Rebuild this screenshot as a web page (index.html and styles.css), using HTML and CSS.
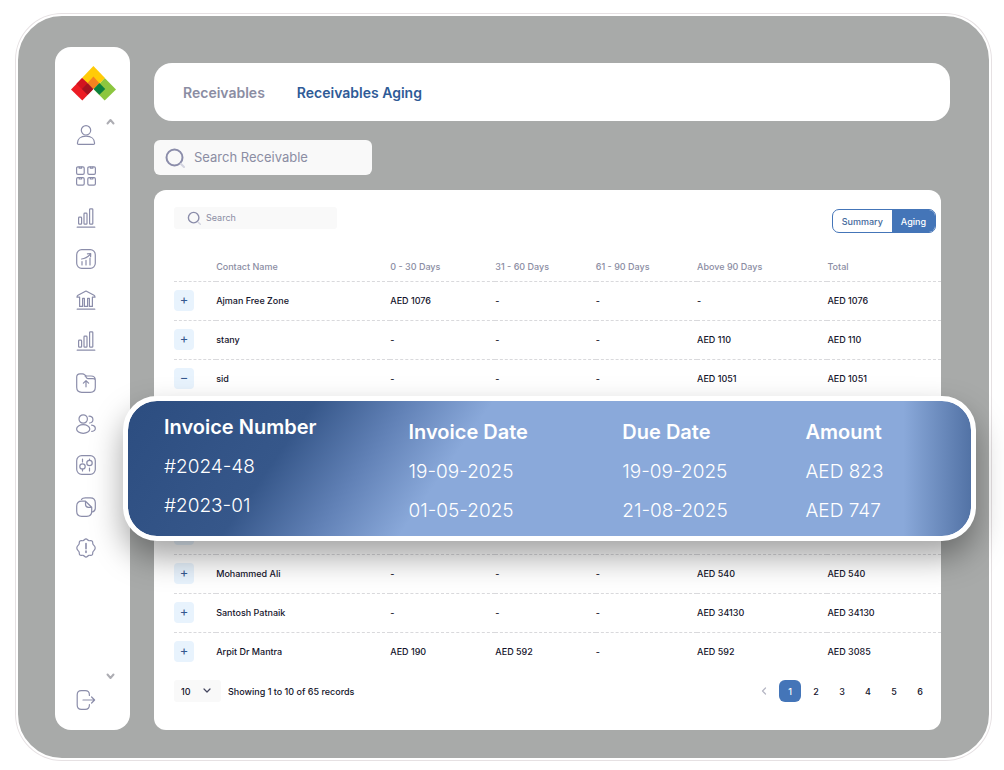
FILE: index.html
```html
<!DOCTYPE html>
<html lang="en">
  <head>
    <meta charset="UTF-8" />
    <meta name="viewport" content="width=device-width, initial-scale=1.0" />
    <title>Receivables Aging</title>
    <link rel="stylesheet" href="styles.css">
  </head>
  <body>
    <div class="frame">
      <aside class="sidebar">
        <a class="logo" href="#" aria-label="Home">
          <svg width="45" height="35" viewBox="0 0 45 35">
            <path fill="#ec1c24" d="M11.3 12 22 23.4 11.3 34.5 0 23.4z" />
            <path fill="#8cc63f" d="M33.7 12 45 23.4 33.7 34.5 22.8 23.4z" />
            <path fill="#ffcb08" d="M22.4 0 34 12 28 18 22.4 23 11 12z" />
            <path fill="#f58220" d="M22.4 10.5 28.2 17 22.4 23 16.6 17z" />
            <path fill="#d2141f" d="M11 12 16.600 17 10.800 23 5.500 17.800z" />
            <path fill="#a5121f" d="M16.6 17 22.4 23 16.6 28.8 10.8 23z" />
            <path fill="#0b7f3f" d="M28.4 17 34.2 23 28.4 28.8 22.6 23z" />
          </svg>
        </a>
        <div class="menu">
          <nav class="nav">
            <a href="#" aria-label="Contacts">
              <svg viewBox="0 0 20 20"><circle cx="10" cy="5.3" r="4.7" /><path d="M1.4 18.2c0-4 3.2-7 8.6-7s8.6 3 8.6 7c0 .8-.5 1.1-1.2 1.1H2.6c-.7 0-1.2-.3-1.2-1.1z" /></svg>
            </a>
            <a href="#" aria-label="Dashboard">
              <svg viewBox="0 0 20 20"><rect x=".6" y=".9" width="7.6" height="7.4" rx="1.3" /><rect x="11.8" y=".9" width="7.6" height="7.4" rx="1.3" /><rect x=".6" y="11.7" width="7.6" height="7.4" rx="1.3" /><rect x="11.8" y="11.7" width="7.6" height="7.4" rx="1.3" /><path d="M3.2 1v1.2h2.4V1M14.4 1v1.2h2.4V1M3.2 11.8V13h2.4v-1.2M14.4 11.8V13h2.4v-1.2" /></svg>
            </a>
            <a href="#" aria-label="Sales">
              <svg viewBox="0 0 20 20"><rect x="2.6" y="9.2" width="3" height="7" rx=".8" /><rect x="8" y="5.2" width="3" height="11" rx=".8" /><rect x="13.6" y=".8" width="3.2" height="15.4" rx=".8" /><path d="M1.2 19.2h17.6" /></svg>
            </a>
            <a href="#" aria-label="Analytics">
              <svg viewBox="0 0 20 20"><rect x=".7" y=".7" width="18.6" height="18.6" rx="5" /><path d="M6 16v-3.4M10 16v-4.6M14 16V9M5.6 10c3.6-.3 6-1.8 8.6-4.6M11.4 4.8l3.3-.3-.1 3.2" /></svg>
            </a>
            <a href="#" aria-label="Banking">
              <svg viewBox="0 0 20 20"><path d="M1 7.2c0-1 .3-1.6 1-2L10 1l8 4.2c.7.4 1 1 1 2h-2.600v9.200h-3V8.400h-1.800v8h-3.200v-8H6.600v8h-3V7.200zM1.200 19.200h17.600" /></svg>
            </a>
            <a href="#" aria-label="Purchases">
              <svg viewBox="0 0 20 20"><rect x="2.6" y="9.2" width="3" height="7" rx=".8" /><rect x="8" y="5.2" width="3" height="11" rx=".8" /><rect x="13.6" y=".8" width="3.2" height="15.4" rx=".8" /><path d="M1.2 19.2h17.6" /></svg>
            </a>
            <a href="#" aria-label="Files">
              <svg viewBox="0 0 20 20"><path d="M.7 5V4C.7 1.800 2 .8 4 .8h2.500c2.300 0 2.300 2.200 4.500 2.200h4c2.600 0 4.300 1.500 4.300 4v7.300c0 3.300-1.700 5-5 5H5.700c-3.300 0-5-1.700-5-5zM9 3c1.200 0 .8 2.600 3 2.600h5c1.300 0 2.100.5 2.300 1.400M10 13.800V8M7.400 10.200 10 7.600l2.600 2.600" /></svg>
            </a>
            <a href="#" aria-label="Employees">
              <svg viewBox="0 0 20 20"><circle cx="7.200" cy="5" r="4.200" /><ellipse cx="7.200" cy="15" rx="6.600" ry="4.300" /><path d="M13 2.200c5 0 5.200 6.200.6 6.800M15.600 11.200c4.900.8 4.900 5.600.2 6.200" /></svg>
            </a>
            <a href="#" aria-label="Adjustments">
              <svg viewBox="0 0 20 20"><rect x=".7" y=".7" width="18.6" height="18.6" rx="5" /><circle cx="6.500" cy="11.500" r="2.700" /><circle cx="13.500" cy="8" r="2.700" /><path d="M6.500 4v3M6.500 14.200V16M13.500 4v1.300M13.500 13v3" /></svg>
            </a>
            <a href="#" aria-label="Documents">
              <svg viewBox="0 0 20 20"><path d="M9.500 4.200H5.700c-3.300 0-5 1.700-5 5v5.100c0 3.300 1.700 5 5 5h5c3.300 0 5-1.700 5-5v-4zM9.500 4.200v3.100c0 2 1 3 3 3h3.200M5.500 2.400C6.300 1.300 7.600.8 9.300.8h5c3.300 0 5 1.700 5 5v5c0 2.200-1 3.700-2.800 4.200" /></svg>
            </a>
            <a href="#" aria-label="Alerts">
              <svg viewBox="0 0 20 20"><path d="M10 .8c1.300 0 1.700 1.700 3 1.900s2.300-.5 3.200.4.200 2 .8 3.200 2.200 1.800 2.200 3.700-1.600 2.500-2.200 3.700.1 2.300-.8 3.200-2 .2-3.200.4-1.700 1.900-3 1.900-1.700-1.700-3-1.900-2.300.5-3.200-.4-.2-2-.8-3.200S.8 11.900.8 10 2.400 7.500 3 6.300 2.900 4 3.800 3.100s2-.2 3.200-.4S8.700.8 10 .8z" /><path stroke-width="1.600" d="M10 5.600v5.200M10 13v1.500" /></svg>
            </a>
          </nav>
          <div class="scroll-arrows">
            <button aria-label="Scroll up"><svg width="9" height="7" viewBox="0 0 9 7"><path d="M1.500 5.500 4.500 2l3 3.500" /></svg></button>
            <button aria-label="Scroll down"><svg width="9" height="7" viewBox="0 0 9 7"><path d="M1.500 1.500 4.500 5l3-3.500" /></svg></button>
          </div>
        </div>
        <a class="logout" href="#" aria-label="Log out">
          <svg viewBox="0 0 20 20"><path d="M13.400 5.400V5c0-3-1.300-4.400-4.200-4.400H5.400C2.500.6 1.200 2 1.200 5v10c0 3 1.300 4.400 4.200 4.400h3.800c2.900 0 4.200-1.400 4.200-4.400v-.4M7 10h11.400M15.600 7l3 3-3 3" /></svg>
        </a>
      </aside>

      <main class="main">
        <nav class="tabs">
          <a href="#">Receivables</a>
          <a href="#" class="active">Receivables Aging</a>
        </nav>

        <label class="search search-main">
          <svg width="20" height="20" viewBox="0 0 20 20"><circle cx="9.500" cy="9.500" r="8" /><path d="m16 16 3 3" /></svg>
          <input type="search" placeholder="Search Receivable" aria-label="Search Receivable" />
        </label>

        <section class="card">
          <div class="toolbar">
            <label class="search search-table">
              <svg width="14" height="14" viewBox="0 0 20 20"><circle cx="9.500" cy="9.500" r="7.500" /><path d="m16 16 3 3" /></svg>
              <input type="search" placeholder="Search" aria-label="Search" />
            </label>
            <div class="toggle">
              <button>Summary</button>
              <button class="active">Aging</button>
            </div>
          </div>

          <table class="aging">
            <thead>
              <tr>
                <th class="col-expand"></th>
                <th class="col-name">Contact Name</th>
                <th class="col-30">0 - 30 Days</th>
                <th class="col-60">31 - 60 Days</th>
                <th class="col-90">61 - 90 Days</th>
                <th class="col-above">Above 90 Days</th>
                <th>Total</th>
              </tr>
            </thead>
            <tbody>
              <tr>
                <td><button class="expand">+</button></td>
                <td>Ajman Free Zone</td>
                <td>AED 1076</td>
                <td>-</td>
                <td>-</td>
                <td>-</td>
                <td>AED 1076</td>
              </tr>
              <tr>
                <td><button class="expand">+</button></td>
                <td>stany</td>
                <td>-</td>
                <td>-</td>
                <td>-</td>
                <td>AED 110</td>
                <td>AED 110</td>
              </tr>
              <tr>
                <td><button class="expand">−</button></td>
                <td>sid</td>
                <td>-</td>
                <td>-</td>
                <td>-</td>
                <td>AED 1051</td>
                <td>AED 1051</td>
              </tr>
              <tr class="detail-row">
                <td colspan="7">
                  <div class="invoices">
                    <table>
                      <thead>
                        <tr>
                          <th class="inv-number">Invoice Number</th>
                          <th class="inv-date">Invoice Date</th>
                          <th class="inv-due">Due Date</th>
                          <th>Amount</th>
                        </tr>
                      </thead>
                      <tbody>
                        <tr>
                          <td>#2024-48</td>
                          <td>19-09-2025</td>
                          <td>19-09-2025</td>
                          <td>AED 823</td>
                        </tr>
                        <tr>
                          <td>#2023-01</td>
                          <td>01-05-2025</td>
                          <td>21-08-2025</td>
                          <td>AED 747</td>
                        </tr>
                      </tbody>
                    </table>
                  </div>
                </td>
              </tr>
              <tr>
                <td><button class="expand" aria-label="Expand"></button></td>
                <td colspan="6"></td>
              </tr>
              <tr>
                <td><button class="expand">+</button></td>
                <td>Mohammed Ali</td>
                <td>-</td>
                <td>-</td>
                <td>-</td>
                <td>AED 540</td>
                <td>AED 540</td>
              </tr>
              <tr>
                <td><button class="expand">+</button></td>
                <td>Santosh Patnaik</td>
                <td>-</td>
                <td>-</td>
                <td>-</td>
                <td>AED 34130</td>
                <td>AED 34130</td>
              </tr>
              <tr>
                <td><button class="expand">+</button></td>
                <td>Arpit Dr Mantra</td>
                <td>AED 190</td>
                <td>AED 592</td>
                <td>-</td>
                <td>AED 592</td>
                <td>AED 3085</td>
              </tr>
            </tbody>
          </table>

          <div class="footer">
            <div class="page-size">
              <select aria-label="Records per page">
                <option>10</option>
              </select>
              <svg width="8" height="6" viewBox="0 0 8 6"><path d="m1 1 3 3 3-3" /></svg>
            </div>
            <span>Showing 1 to 10 of 65 records</span>
            <nav class="pages">
              <button class="prev" aria-label="Previous page"><svg width="6" height="8" viewBox="0 0 6 8"><path d="M4.500 1 1.500 4l3 3" /></svg></button>
              <button class="active">1</button>
              <button>2</button>
              <button>3</button>
              <button>4</button>
              <button>5</button>
              <button>6</button>
            </nav>
          </div>
        </section>
      </main>
    </div>
  </body>
</html>
```

FILE: styles.css
```css
* {
  box-sizing: border-box;
}

body {
  font-family: Inter, "Liberation Sans", sans-serif;
  background-color: #fff;
  color: #14142b;
  margin: 0;
  padding: 14px 13px 10px 16px;
}

button {
  font-family: inherit;
  border: none;
  background: none;
  padding: 0;
  cursor: pointer;
}

a {
  text-decoration: none;
}

svg {
  display: block;
  fill: none;
  stroke: #8b8daa;
  stroke-width: 1.2;
  stroke-linecap: round;
  stroke-linejoin: round;
}

.frame {
  display: flex;
  gap: 24px;
  padding: 31px 39px 28px 37px;
  background-color: #a8aaa9;
  border: 2px solid #fff;
  border-radius: 46px;
  box-shadow: 0 0 0 1px #e6e1e3;
}

/* Sidebar */
.sidebar {
  width: 75px;
  flex-shrink: 0;
  display: flex;
  flex-direction: column;
  padding: 19px 0 20px;
  background-color: #fff;
  border-radius: 16px;
}

.logo {
  padding-left: 16px;
}

.logo svg {
  stroke: none;
}

.menu {
  flex: 1;
  display: flex;
  gap: 10px;
  padding: 17px 0 10px 21px;
}

.nav {
  display: flex;
  flex-direction: column;
  justify-content: space-between;
  padding: 7px 0 122px;
}

.nav svg,
.logout svg {
  width: 20px;
  height: 20px;
}

.scroll-arrows {
  display: flex;
  flex-direction: column;
  justify-content: space-between;
}

.scroll-arrows svg {
  stroke: #adadb3;
  stroke-width: 2;
}

.logout {
  padding-left: 21px;
}

/* Main area */
.main {
  flex: 1;
  min-width: 0;
  padding-top: 16px;
}

.tabs {
  display: flex;
  align-items: center;
  gap: 32px;
  height: 58px;
  padding: 0 29px;
  background-color: #fff;
  border-radius: 18px;
}

.tabs a {
  font-size: 14px;
  font-weight: 600;
  color: #8b8da3;
}

.tabs .active {
  color: #2f5b97;
}

.search {
  display: flex;
  align-items: center;
  background-color: #f9f9f9;
}

.search input {
  flex: 1;
  min-width: 0;
  padding: 0 0 2px;
  border: none;
  outline: none;
  background: none;
  font-family: inherit;
  font-size: inherit;
  color: #14142b;
}

.search input::placeholder {
  color: #8b8da3;
  opacity: 1;
}

.search path {
  stroke: #d3d4e0;
}

.search-main {
  width: 218px;
  height: 35px;
  margin: 19px 0 15px;
  padding: 0 11px;
  gap: 9px;
  border-radius: 6px;
  font-size: 13px;
}

.search-main svg {
  stroke-width: 2;
}

.card {
  margin-right: 9px;
  padding: 17px 0 28px 20px;
  background-color: #fff;
  border-radius: 12px;
}

.toolbar {
  display: flex;
  align-items: flex-start;
  justify-content: space-between;
  padding-right: 5px;
}

.search-table {
  width: 163px;
  height: 22px;
  padding: 0 13px;
  gap: 5px;
  border-radius: 3px;
  font-size: 9px;
}

.search-table svg {
  stroke-width: 2;
}

.toggle {
  display: flex;
  height: 24px;
  margin-top: 2px;
  border: 1px solid #4475b8;
  border-radius: 7px;
  overflow: hidden;
}

.toggle button {
  padding: 0 9px;
  font-size: 9px;
  font-weight: 500;
  color: #44699c;
}

.toggle .active {
  background-color: #4475b8;
  color: #fff;
}

/* Aging table */
.aging {
  width: 100%;
  margin-top: 20px;
  table-layout: fixed;
  border-collapse: collapse;
  font-size: 9px;
}

.aging th,
.aging td {
  padding: 0;
  text-align: left;
}

.aging > thead th {
  height: 28px;
  color: #8b8da3;
  font-weight: 500;
}

.aging > tbody > tr > td {
  height: 39px;
  border-top: 1px dashed #d9d9dc;
  font-weight: 500;
}

.col-expand {
  width: 5.5%;
}

.col-name {
  width: 22.7%;
}

.col-30 {
  width: 13.7%;
}

.col-60 {
  width: 13.1%;
}

.col-90 {
  width: 13.2%;
}

.col-above {
  width: 17%;
}

.expand {
  display: block;
  width: 20px;
  height: 21px;
  padding-bottom: 3px;
  background-color: #e8f3fd;
  border-radius: 4px;
  color: #34598f;
  font-size: 13px;
  line-height: 18px;
}

.aging > tbody > .detail-row > td {
  position: relative;
  height: 117px;
}

/* Expanded invoices, floats over the rows */
.invoices {
  position: absolute;
  top: -3px;
  left: -51px;
  right: -35px;
  padding: 12px 0 6px 36px;
  border: 5px solid #fff;
  border-radius: 34px;
  background:
    linear-gradient(90deg, transparent 92%, rgba(45, 78, 130, 0.6)) padding-box,
    linear-gradient(125deg, #2c4d80 0%, #36578a 20%, #6282b7 30%, #8aa9da 39%, #8aa9da 100%) padding-box,
    #fff;
  box-shadow: 0 16px 32px rgba(0, 0, 0, 0.36);
  color: #fff;
}

.invoices table {
  width: 100%;
  table-layout: fixed;
  border-collapse: collapse;
}

.invoices th,
.invoices td {
  height: 39px;
  font-size: 19px;
  font-weight: 300;
}

.invoices th {
  font-size: 20px;
  font-weight: 600;
}

.invoices th:first-child,
.invoices td:first-child {
  padding-bottom: 10px;
}

.inv-number {
  width: 30.3%;
}

.inv-date {
  width: 26.5%;
}

.inv-due {
  width: 22.7%;
}

/* Footer */
.footer {
  display: flex;
  align-items: center;
  padding: 9px 10px 0 0;
  font-size: 9px;
  font-weight: 500;
}

.page-size {
  display: grid;
  align-items: center;
  margin-right: 7px;
}

.page-size select,
.page-size svg {
  grid-area: 1 / 1;
}

.page-size select {
  appearance: none;
  width: 47px;
  height: 22px;
  padding: 0 7px;
  border: none;
  border-radius: 3px;
  background-color: #f9f9f9;
  font-family: inherit;
  font-size: 9px;
  font-weight: 500;
  color: #14142b;
}

.page-size svg {
  justify-self: end;
  margin-right: 10px;
  stroke: #44465f;
  pointer-events: none;
}

.pages {
  display: flex;
  gap: 4px;
  margin-left: auto;
}

.pages button {
  width: 22px;
  height: 22px;
  font-size: 9px;
  font-weight: 500;
  color: #14142b;
}

.pages svg {
  margin: 0 auto;
  stroke: #b4b5c3;
}

.pages .active {
  background-color: #4475b8;
  border-radius: 6px;
  color: #fff;
}
```
